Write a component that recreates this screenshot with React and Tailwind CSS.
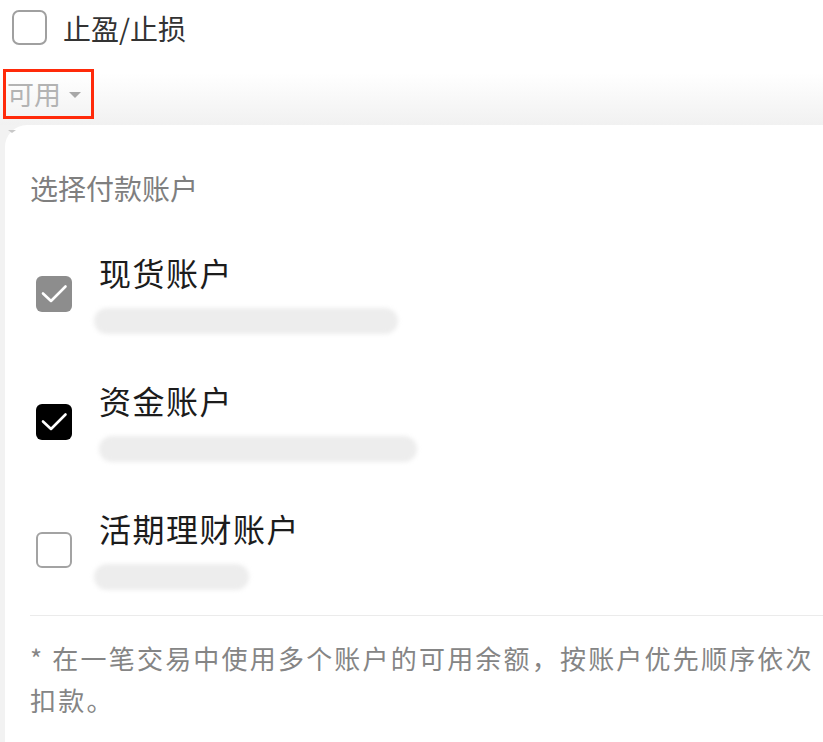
import React from 'react';

const accounts = [
  { name: '现货账户', state: 'gray', bar: 'w-[304px] -ml-[5px]' },
  { name: '资金账户', state: 'black', bar: 'w-[318px] ml-0' },
  { name: '活期理财账户', state: 'empty', bar: 'w-[155px] -ml-[5px]' },
];

const Check = () => (
  <svg viewBox="0 0 36 36" className="w-full h-full" fill="none">
    <path d="M7 17.5L15 25L29.5 10.5" stroke="#fff" strokeWidth="2.6" strokeLinecap="round" strokeLinejoin="round" />
  </svg>
);

const Box = ({ state }) => {
  if (state === 'gray') {
    return (
      <div className="w-[36px] h-[36px] rounded-[6px] bg-[#8d8d8d] shrink-0">
        <Check />
      </div>
    );
  }
  if (state === 'black') {
    return (
      <div className="w-[36px] h-[36px] rounded-[6px] bg-black shrink-0">
        <Check />
      </div>
    );
  }
  return <div className="w-[36px] h-[36px] rounded-[6px] border-2 border-[#a3a3a3] bg-white shrink-0" />;
};

export default function App() {
  return (
    <div className="w-[823px] h-[742px] overflow-hidden bg-white font-['Noto_Sans_CJK_SC',sans-serif]">
      {/* stop-loss toggle */}
      <div className="flex items-center gap-[16px] pl-[12px] pt-[10px] h-[45px]">
        <div className="w-[35px] h-[35px] rounded-[7px] border-2 border-[#a0a0a0]" />
        <span className="text-[28px] leading-[34px] text-[#333]">止盈/止损</span>
      </div>

      {/* available selector, sheet shadow behind */}
      <div className="h-[80px] bg-linear-to-b from-white from-35% to-[#f1f1f1]">
        <div className="ml-[3px] pt-[24px]">
          <div className="w-[91px] h-[50px] border-[3px] border-[#ff2a0a] flex items-center pl-[1px] gap-[8px]">
            <span className="text-[27px] leading-[32px] text-[#b3b3b3]">可用</span>
            <span className="w-0 h-0 border-l-[6px] border-r-[6px] border-t-[6px] border-l-transparent border-r-transparent border-t-[#a8a8a8] mt-[1px]" />
          </div>
        </div>
      </div>

      {/* payment account sheet */}
      <div className="bg-[#f2f2f2] pl-[5px] h-[617px]">
        <div className="relative h-full bg-white rounded-tl-[22px] pl-[25px] pt-[46px]">
          <span className="absolute left-[3px] top-[5px] w-0 h-0 border-l-[4px] border-r-[4px] border-t-[3px] border-l-transparent border-r-transparent border-t-[#c8c8c8]" />
          <div className="text-[28px] leading-[34px] text-[#7f7f7f]">选择付款账户</div>

          <div className="mt-[48px] ml-[6px] flex flex-col gap-[47px]">
            {accounts.map((a) => (
              <div key={a.name} className="flex items-center gap-[27px]">
                <Box state={a.state} />
                <div className="flex flex-col">
                  <span className="text-[32px] leading-[38px] tracking-[1.5px] text-[#1c1c1c]">{a.name}</span>
                  <div className={`mt-[17px] h-[26px] rounded-full bg-[#ededed] blur-[2px] ${a.bar}`} />
                </div>
              </div>
            ))}
          </div>

          <div className="mt-[25px] h-px bg-[#ebebeb]" />

          <p className="mt-[21px] text-[26px] leading-[42px] tracking-[2.2px] text-[#858585]">
            * 在一笔交易中使用多个账户的可用余额，按账户优先顺序依次扣款。
          </p>
        </div>
      </div>
    </div>
  );
}
